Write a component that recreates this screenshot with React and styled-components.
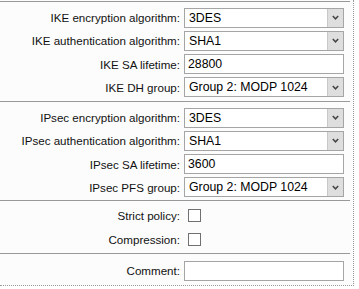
import React from "react";
import styled, { createGlobalStyle } from "styled-components";

const Global = createGlobalStyle`
  html, body { margin: 0; padding: 0; background: #ffffff; }
  body { font-family: "Liberation Sans", Arial, sans-serif; font-size: 11.6px; color: #000; }
`;

const Page = styled.div`
  width: 354px;
  height: 286px;
  box-sizing: border-box;
  border-right: 1px dotted #9a9a9a;
  border-bottom: 1px dotted #9a9a9a;
  background: #fcfcfc;
  padding-top: 1px;
`;

const Section = styled.div`
  width: 350px;
  box-sizing: border-box;
  border-top: 1px solid #999;
  height: ${(p) => p.$h}px;
  padding-top: ${(p) => p.$pt}px;
  display: flex;
  flex-direction: column;
`;

const Row = styled.div`
  display: grid;
  grid-template-columns: 180px 1fr;
  column-gap: 4px;
  align-items: center;
  height: ${(p) => p.$h || 23.25}px;
`;

const Label = styled.label`
  text-align: right;
  white-space: nowrap;
  color: #111;
`;

const SelectBox = styled.div`
  width: 160px;
  height: 20px;
  box-sizing: border-box;
  border: 1px solid #a5a5a5;
  background: #fff;
  display: flex;
  align-items: center;
  padding-left: 4px;
`;

const SelectText = styled.span`
  flex: 1;
  font-size: 12.3px;
  color: #000;
`;

const Arrow = styled.span`
  width: 16px;
  height: 18px;
  box-sizing: border-box;
  border-left: 1px solid #c8c8c8;
  background: #dedede;
  display: flex;
  align-items: center;
  justify-content: center;
`;

const TextInput = styled.input`
  width: 160px;
  height: 20px;
  box-sizing: border-box;
  border: 1px solid #a5a5a5;
  background: #fff;
  padding: 0 0 0 3px;
  margin: 0;
  font-family: "Liberation Sans", Arial, sans-serif;
  font-size: 12.3px;
  color: #000;
  outline: none;
`;

const Check = styled.span`
  display: block;
  width: 13px;
  height: 13px;
  box-sizing: border-box;
  border: 1px solid #707070;
  background: #fff;
  margin-left: 4px;
`;

const Select = ({ value }) => (
  <SelectBox>
    <SelectText>{value}</SelectText>
    <Arrow>
      <svg width="7" height="5" viewBox="0 0 7 5">
        <path d="M0.8 1 L3.5 3.8 L6.2 1" fill="none" stroke="#444" strokeWidth="1.5" />
      </svg>
    </Arrow>
  </SelectBox>
);

export default function App() {
  return (
    <>
      <Global />
      <Page>
        <Section $h={100} $pt={4}>
          <Row><Label>IKE encryption algorithm:</Label><Select value="3DES" /></Row>
          <Row><Label>IKE authentication algorithm:</Label><Select value="SHA1" /></Row>
          <Row><Label>IKE SA lifetime:</Label><TextInput defaultValue="28800" /></Row>
          <Row><Label>IKE DH group:</Label><Select value="Group 2: MODP 1024" /></Row>
        </Section>
        <Section $h={99} $pt={4}>
          <Row><Label>IPsec encryption algorithm:</Label><Select value="3DES" /></Row>
          <Row><Label>IPsec authentication algorithm:</Label><Select value="SHA1" /></Row>
          <Row><Label>IPsec SA lifetime:</Label><TextInput defaultValue="3600" /></Row>
          <Row><Label>IPsec PFS group:</Label><Select value="Group 2: MODP 1024" /></Row>
        </Section>
        <Section $h={53} $pt={2}>
          <Row $h={24.5}><Label>Strict policy:</Label><Check /></Row>
          <Row $h={24.5}><Label>Compression:</Label><Check /></Row>
        </Section>
        <Section $h={32} $pt={6}>
          <Row $h={21}><Label>Comment:</Label><TextInput defaultValue="" /></Row>
        </Section>
      </Page>
    </>
  );
}
